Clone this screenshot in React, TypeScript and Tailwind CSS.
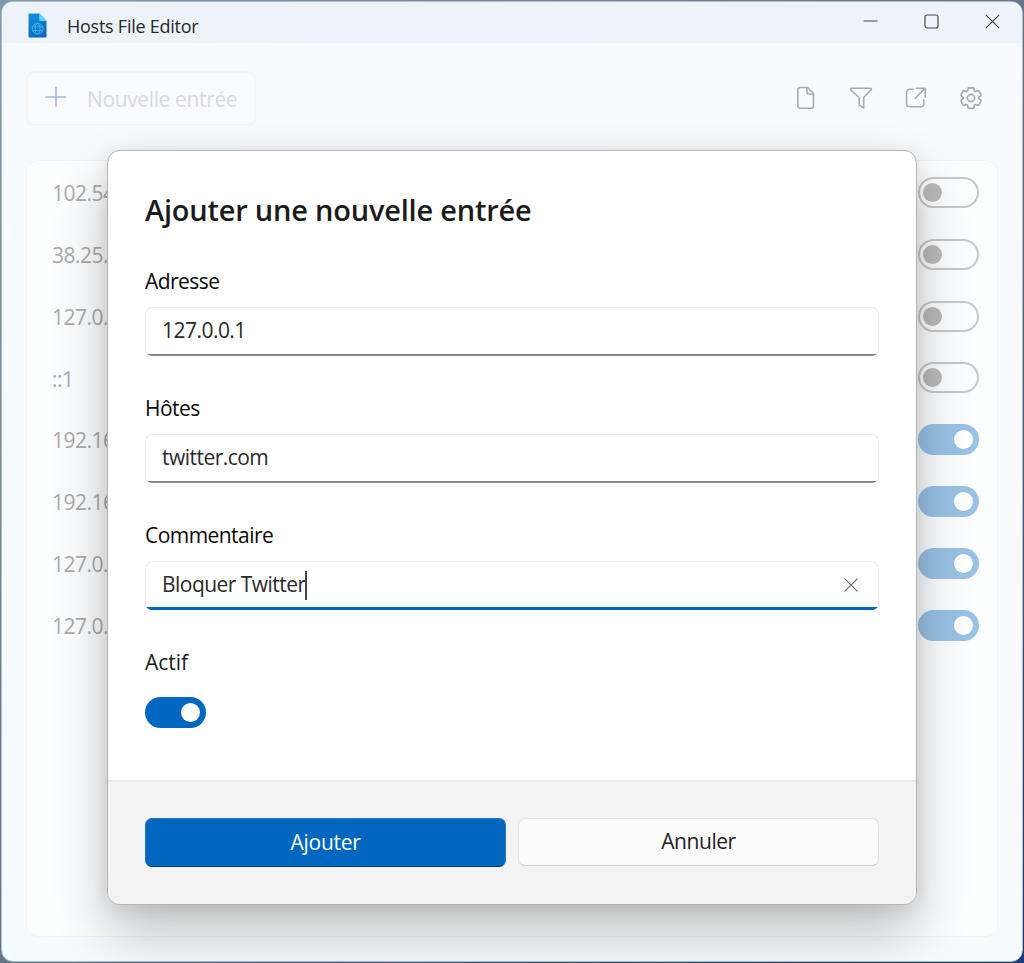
import type { ReactNode } from "react";
import clsx from "clsx";

const entries = [
  { address: "102.54", active: false },
  { address: "38.25.", active: false },
  { address: "127.0.", active: false },
  { address: "::1", active: false },
  { address: "192.16", active: true },
  { address: "192.16", active: true },
  { address: "127.0.", active: true },
  { address: "127.0.", active: true },
];

function AppIcon() {
  return (
    <svg width="20" height="26" viewBox="0 0 20 26" fill="none" className="mt-[7px]">
      <defs>
        <linearGradient id="file" x1="0" y1="0" x2="12" y2="26" gradientUnits="userSpaceOnUse">
          <stop stopColor="#1593dc" />
          <stop offset="1" stopColor="#0a66bb" />
        </linearGradient>
      </defs>
      <path d="M1.5.5h10l7 7.5v15.5a1 1 0 0 1-1 1h-16a1 1 0 0 1-1-1v-22a1 1 0 0 1 1-1Z" fill="url(#file)" />
      <path d="M11.2.5 18.5 8h-6a1.3 1.3 0 0 1-1.3-1.3V.5Z" fill="#5bd3fa" />
      <g stroke="#43b9ef" strokeWidth=".9">
        <circle cx="9.6" cy="15.7" r="5.4" />
        <ellipse cx="9.6" cy="15.7" rx="2.4" ry="5.4" />
        <path d="M4.8 13.8h9.6M4.8 17.6h9.6" />
      </g>
    </svg>
  );
}

function Icon({ children }: { children: ReactNode }) {
  return (
    <svg width="24" height="24" viewBox="0 0 24 24" fill="none" stroke="#a9abad" strokeWidth="1.6" strokeLinejoin="round" strokeLinecap="round">
      {children}
    </svg>
  );
}

function TitleBar() {
  return (
    <header className="flex h-[41px] shrink-0 items-center bg-[#eef3fa] pl-[26px]">
      <AppIcon />
      <h1 className="mt-[7px] ml-[19px] text-[18px] tracking-[-0.25px] text-[#26282b]">Hosts File Editor</h1>
      <div className="ml-auto flex gap-[46px] pr-[22.5px] pb-[3px]">
        {["M.5 7h14", "M3 1h9a2 2 0 0 1 2 2v9a2 2 0 0 1-2 2H3a2 2 0 0 1-2-2V3a2 2 0 0 1 2-2Z", "m.8.8 13.4 13.4m0-13.4L.8 14.2"].map((d) => (
          <svg key={d} width="15" height="15" viewBox="0 0 15 15" fill="none" stroke="#45474a" strokeWidth="1.2">
            <path d={d} />
          </svg>
        ))}
      </div>
    </header>
  );
}

function Toolbar() {
  return (
    <div className="mt-[28px] flex h-[55px] items-center justify-between">
      <button className="flex h-full w-[230px] items-center rounded-lg border-2 border-[#f3f5f7] bg-[#fafbfd] pl-[17px]">
        <svg width="22" height="22" viewBox="0 0 22 22" stroke="#a3b9dc" strokeWidth="1.6" strokeLinecap="round" className="-mt-[3px]">
          <path d="M11 1.2v19M1 11h19.5" />
        </svg>
        <span className="mt-[3px] ml-[20px] text-[21px] tracking-[-0.37px] whitespace-nowrap text-[#d8d9db]">Nouvelle entrée</span>
      </button>
      <div className="flex gap-[31px] pr-[15px] pb-px">
        <Icon>
          <path d="M6 1.5h7.5l6 6V20a2.2 2.2 0 0 1-2.2 2.2H6A2.2 2.2 0 0 1 3.8 20V3.7A2.2 2.2 0 0 1 6 1.5Z" />
          <path d="M13 1.7v4.8c0 .9.6 1.5 1.5 1.5h4.8" />
        </Icon>
        <Icon>
          <path d="M2.5 2.3h19c.9 0 1.2 1 .6 1.6L14.7 11.5v10.7l-4.5-3.1v-7.6L1.8 3.9c-.6-.6-.2-1.6.7-1.6Z" />
        </Icon>
        <Icon>
          <path d="M9 3.3H5.8a3.3 3.3 0 0 0-3.3 3.3v10.8a3.3 3.3 0 0 0 3.3 3.3h10.8a3.3 3.3 0 0 0 3.3-3.3V14M12.3 2.2h8.9v9M21 2.4l-9.8 9.8" />
        </Icon>
        <Icon>
          <circle cx="12" cy="12" r="3.6" />
          <path
            d="M12 2.25c.74 0 1.47.1 2.18.25.32.07.55.33.59.65l.17 1.53a1.38 1.38 0 0 0 1.92 1.11l1.4-.61c.3-.13.64-.06.85.17a9.8 9.8 0 0 1 2.2 3.8c.1.3 0 .63-.26.82l-1.25.92a1.38 1.38 0 0 0 0 2.22l1.25.92c.26.19.36.52.27.82a9.8 9.8 0 0 1-2.2 3.8.75.75 0 0 1-.85.17l-1.4-.62a1.38 1.38 0 0 0-1.93 1.12l-.17 1.52a.75.75 0 0 1-.58.65 9.52 9.52 0 0 1-4.4 0 .75.75 0 0 1-.57-.65l-.17-1.52a1.38 1.38 0 0 0-1.93-1.11l-1.4.62a.75.75 0 0 1-.85-.18 9.8 9.8 0 0 1-2.2-3.8c-.1-.3 0-.63.27-.82l1.24-.92a1.38 1.38 0 0 0 0-2.22l-1.24-.92a.75.75 0 0 1-.28-.82 9.8 9.8 0 0 1 2.2-3.8c.23-.23.57-.3.86-.17l1.4.62a1.38 1.38 0 0 0 1.93-1.12l.17-1.53a.75.75 0 0 1 .58-.65c.72-.16 1.45-.24 2.2-.25Z"
            transform="translate(-.8 -.8) scale(1.067)"
          />
        </Icon>
      </div>
    </div>
  );
}

function EntryToggle({ active }: { active: boolean }) {
  return (
    <div
      className={clsx(
        "flex h-[31px] w-[61px] items-center rounded-full",
        active ? "justify-end bg-[#99c2e6] pr-[6px]" : "border-2 border-[#c6c7c8] pl-[3px]"
      )}
    >
      <div className={clsx("size-[19px] rounded-full", active ? "bg-white" : "bg-[#bababa]")} />
    </div>
  );
}

function EntryList() {
  return (
    <div className="mt-[34px] h-[777px] rounded-xl border border-[#f1f4f7] bg-[#fcfdfe] pt-[0.4px] pr-[18.5px] pl-[25px]">
      {entries.map((entry, i) => (
        <div key={i} className="flex h-[61.85px] items-center justify-between">
          <span className="mt-[3px] text-[21px] tracking-[-0.5px] text-[#aaabac]">{entry.address}</span>
          <EntryToggle active={entry.active} />
        </div>
      ))}
    </div>
  );
}

function Field({ label, value, focused = false }: { label: string; value: string; focused?: boolean }) {
  return (
    <div className="h-[127.1px]">
      <div className="h-[39.5px] text-[21px] leading-[28px] tracking-[-0.55px] text-[#090909]">{label}</div>
      <div className="relative flex h-[49px] items-center overflow-hidden rounded-[7px] bg-white px-[17px] text-[21px] text-[#2a2a2a] inset-ring inset-ring-[#ebebeb]">
        <span className="tracking-[-0.53px]">{value}</span>
        {focused && (
          <>
            <span className="-ml-px h-[29px] w-[2px] bg-[#444444]" />
            <svg width="14" height="14" viewBox="0 0 14 14" stroke="#6a6a6a" strokeWidth="1.2" strokeLinecap="round" className="mr-[4px] ml-auto">
              <path d="m.8.8 12.4 12.4m0-12.4L.8 13.2" />
            </svg>
          </>
        )}
        <div className={clsx("absolute inset-x-0 bottom-0", focused ? "h-[3px] bg-[#0067c0]" : "h-[2px] bg-linear-to-b from-[#777777] to-[#999999]")} />
      </div>
    </div>
  );
}

function AddEntryDialog() {
  return (
    <div className="absolute top-[150px] left-[107px] flex h-[755px] w-[810px] flex-col overflow-hidden rounded-[13px] border border-[#b2b4b5] bg-white shadow-[0_28px_54px_rgba(0,0,0,0.24),0_2px_18px_rgba(0,0,0,0.09)]">
      <div className="flex-1 px-[37px] pt-[39px]">
        <h2 className="h-[77px] text-[29px] leading-[40px] font-semibold tracking-[-0.22px] text-[#1b1b1b]">Ajouter une nouvelle entrée</h2>
        <Field label="Adresse" value="127.0.0.1" />
        <Field label="Hôtes" value="twitter.com" />
        <Field label="Commentaire" value="Bloquer Twitter" focused />
        <div className="text-[21px] leading-[28px] tracking-[-0.05px] text-[#1b1b1b]">Actif</div>
        <div className="mt-[21px] flex h-[31px] w-[61px] items-center justify-end rounded-full bg-[#0067c0] pr-[6px]">
          <div className="size-[19px] rounded-full bg-white" />
        </div>
      </div>
      <div className="flex h-[124px] gap-3 border-t-2 border-[#e9e9e9] bg-[#f3f3f3] px-[37px] pt-[36px]">
        <button className="h-[48.5px] flex-1 rounded-[7px] border border-[#2079c5] border-b-[#003e73] bg-[#0067c0] text-[21px] tracking-[-0.3px] text-white">Ajouter</button>
        <button className="h-[48px] flex-1 rounded-[7px] border border-[#e4e4e4] border-b-[#cecece] bg-[#fbfbfb] text-[21px] tracking-[-0.45px] text-[#1f1f1f]">Annuler</button>
      </div>
    </div>
  );
}

export default function App() {
  return (
    <div className="relative h-[963px] w-[1024px] overflow-hidden bg-linear-to-br from-[#7e9bae] via-[#667585] to-[#183b78] p-px font-['Open_Sans','Noto_Sans',sans-serif]">
      <div className="flex h-[961px] flex-col overflow-hidden rounded-xl border border-[#b5bdc7] bg-linear-to-r from-[#f6fbff] to-[#f9fafd]">
        <TitleBar />
        <main className="px-[24px]">
          <Toolbar />
          <EntryList />
        </main>
      </div>
      <AddEntryDialog />
    </div>
  );
}
